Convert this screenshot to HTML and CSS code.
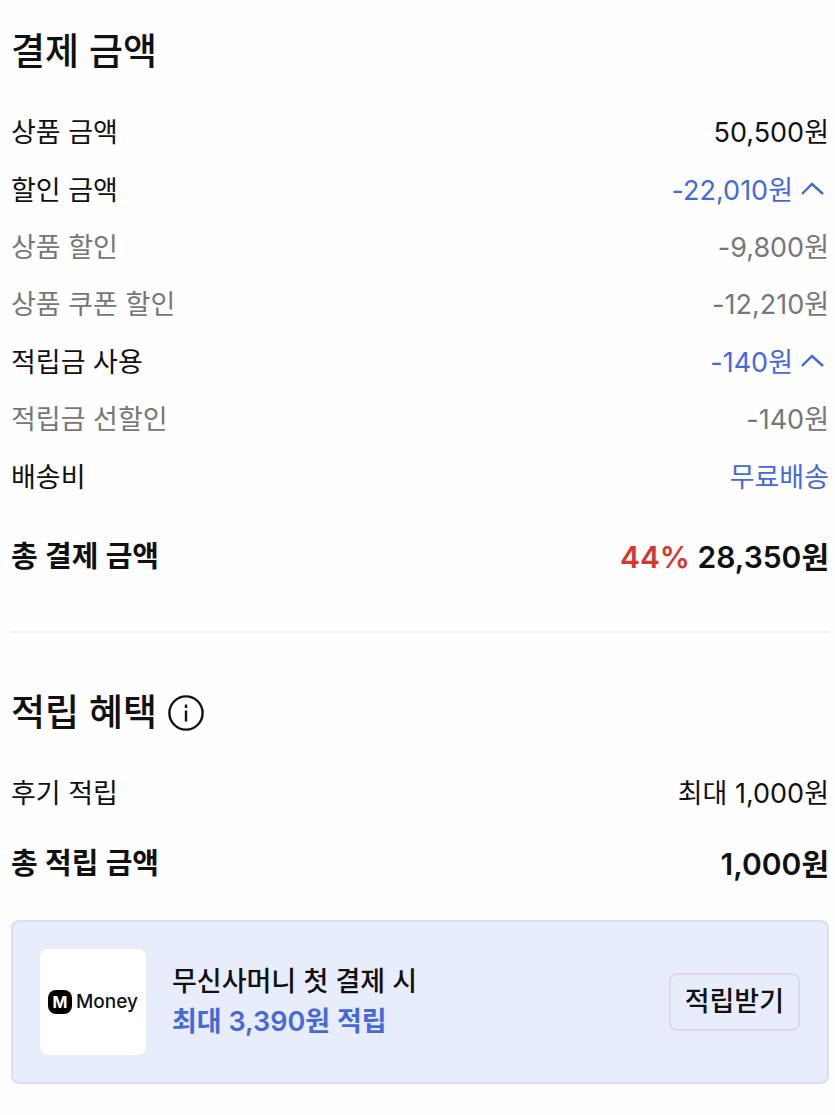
FILE: index.html
```html
<!DOCTYPE html>
<html lang="ko">
<head>
    <meta charset="UTF-8">
    <meta name="viewport" content="width=device-width, initial-scale=1.0">
    <title>결제 금액</title>
    <link rel="stylesheet" href="styles.css">
</head>
<body>
    <main class="order-summary">
        <section class="payment">
            <h2 class="section-title">결제 금액</h2>

            <dl class="price-list">
                <div class="price-group">
                    <div class="price-row">
                        <dt>상품 금액</dt>
                        <dd>50,500원</dd>
                    </div>
                </div>

                <div class="price-group">
                    <div class="price-row">
                        <dt>할인 금액</dt>
                        <dd>
                            <button type="button" class="toggle-button" aria-expanded="true">
                                -22,010원
                                <svg class="chevron" viewBox="0 0 36 40" aria-hidden="true"><path d="M9 23 L19 13 L30 23"/></svg>
                            </button>
                        </dd>
                    </div>
                    <div class="price-row sub">
                        <dt>상품 할인</dt>
                        <dd>-9,800원</dd>
                    </div>
                    <div class="price-row sub">
                        <dt>상품 쿠폰 할인</dt>
                        <dd>-12,210원</dd>
                    </div>
                </div>

                <div class="price-group">
                    <div class="price-row">
                        <dt>적립금 사용</dt>
                        <dd>
                            <button type="button" class="toggle-button" aria-expanded="true">
                                -140원
                                <svg class="chevron" viewBox="0 0 36 40" aria-hidden="true"><path d="M9 23 L19 13 L30 23"/></svg>
                            </button>
                        </dd>
                    </div>
                    <div class="price-row sub">
                        <dt>적립금 선할인</dt>
                        <dd>-140원</dd>
                    </div>
                </div>

                <div class="price-group">
                    <div class="price-row">
                        <dt>배송비</dt>
                        <dd class="highlight">무료배송</dd>
                    </div>
                </div>
            </dl>

            <dl class="total">
                <div class="price-row">
                    <dt>총 결제 금액</dt>
                    <dd><span class="discount-rate">44%</span> 28,350원</dd>
                </div>
            </dl>
        </section>

        <section class="rewards">
            <div class="title-row">
                <h2 class="section-title">적립 혜택</h2>
                <button type="button" class="info-button" aria-label="적립 혜택 안내">
                    <svg class="info-icon" viewBox="0 0 36 36" aria-hidden="true">
                        <circle cx="18" cy="18" r="16.6"/>
                        <path d="M18 9.5v3.5M18 15.5v11"/>
                    </svg>
                </button>
            </div>

            <dl class="price-list">
                <div class="price-row">
                    <dt>후기 적립</dt>
                    <dd>최대 1,000원</dd>
                </div>
            </dl>

            <dl class="total">
                <div class="price-row">
                    <dt>총 적립 금액</dt>
                    <dd>1,000원</dd>
                </div>
            </dl>

            <div class="money-banner">
                <div class="money-logo">
                    <svg class="money-mark" viewBox="0 0 24 24" aria-hidden="true">
                        <rect width="24" height="24" rx="8"/>
                        <text x="12" y="18" text-anchor="middle">M</text>
                    </svg>
                    <span>Money</span>
                </div>
                <p class="money-text">
                    무신사머니 첫 결제 시<br>
                    <strong>최대 3,390원 적립</strong>
                </p>
                <button type="button" class="receive-button">적립받기</button>
            </div>
        </section>
    </main>
</body>
</html>
```

FILE: styles.css
```css
* {
    box-sizing: border-box;
}

body {
    margin: 0;
    background-color: #fefefe;
    color: #111;
    font-family: Inter, "Noto Sans CJK KR", sans-serif;
    font-size: 27px;
    line-height: 40px;
}

button {
    padding: 0;
    border: none;
    background: none;
    color: inherit;
    font: inherit;
    cursor: pointer;
}

dl, dd, p {
    margin: 0;
}

.order-summary {
    padding: 26px 6px 32px 11px;
}

.payment {
    padding-bottom: 54px;
    border-bottom: 2px solid #f3f3f4;
}

.rewards {
    padding-top: 54px;
}

.section-title {
    margin: 0;
    font-size: 37px;
    font-weight: 500;
    line-height: 52px;
}

.title-row {
    display: flex;
    align-items: center;
    gap: 11px;
}

.info-button {
    display: flex;
}

.info-icon {
    width: 36px;
    height: 36px;
    fill: none;
    stroke: #111;
    stroke-width: 2.4;
}

.price-list {
    display: flex;
    flex-direction: column;
    gap: 18px;
    margin-top: 35px;
}

.price-group {
    display: flex;
    flex-direction: column;
    gap: 17px;
}

.price-row {
    display: flex;
    justify-content: space-between;
}

.sub {
    color: #777;
}

.highlight, .toggle-button {
    color: #4769d8;
}

.toggle-button {
    display: flex;
}

.chevron {
    width: 36px;
    height: 40px;
    fill: none;
    stroke: currentColor;
    stroke-width: 2.4;
}

.total {
    margin-top: 39px;
    font-size: 29px;
    font-weight: 600;
}

.total dd {
    font-size: 30px;
}

.rewards .total {
    margin-top: 30px;
}

.discount-rate {
    color: #d3392f;
}

.money-banner {
    display: flex;
    align-items: center;
    margin-top: 36px;
    padding: 27px;
    border: 2px solid #d7dff6;
    border-radius: 8px;
    background-color: #e7edfb;
}

.money-logo {
    display: flex;
    align-items: center;
    justify-content: center;
    gap: 4px;
    width: 106px;
    height: 106px;
    border-radius: 8px;
    background-color: #fff;
    font-size: 19px;
    font-weight: 500;
}

.money-mark {
    width: 24px;
    height: 24px;
}

.money-mark text {
    fill: #fff;
    font-size: 16px;
    font-weight: 700;
}

.money-text {
    flex: 1;
    margin-left: 26px;
    font-weight: 500;
}

.money-text strong {
    color: #4769d8;
    font-weight: 600;
}

.receive-button {
    padding: 7px 14px;
    border: 2px solid #dcdbe9;
    border-radius: 8px;
    font-weight: 500;
}
```
